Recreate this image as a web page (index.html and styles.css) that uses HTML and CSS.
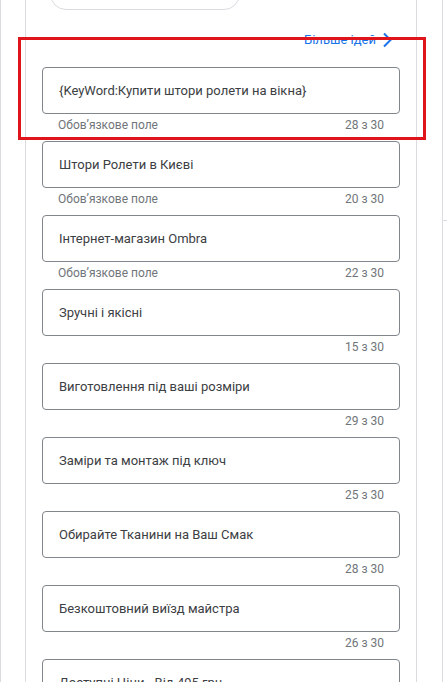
FILE: index.html
```html
<!DOCTYPE html>
<html lang="uk">

<head>
    <meta charset="UTF-8">
    <title>Заголовки</title>
    <link rel="stylesheet" href="styles.css">
</head>

<body>
    <div class="page">
        <div class="panel">
            <div class="chip"></div>

            <div class="more_row">
                <a class="more_link" href="#">Більше ідей</a>
                <svg class="chevron" width="11" height="16" viewBox="0 0 11 16">
                    <path d="M2 1.5l6.5 6.5-6.5 6.5" fill="none" stroke="#1a73e8" stroke-width="2" />
                </svg>
            </div>

            <div class="field">
                <div class="field_box">{KeyWord:Купити штори ролети на вікна}</div>
                <div class="field_help"><span>Обов’язкове поле</span><span>28 з 30</span></div>
            </div>
            <div class="field">
                <div class="field_box">Штори Ролети в Києві</div>
                <div class="field_help"><span>Обов’язкове поле</span><span>20 з 30</span></div>
            </div>
            <div class="field">
                <div class="field_box">Інтернет-магазин Ombra</div>
                <div class="field_help"><span>Обов’язкове поле</span><span>22 з 30</span></div>
            </div>
            <div class="field">
                <div class="field_box">Зручні і якісні</div>
                <div class="field_help"><span></span><span>15 з 30</span></div>
            </div>
            <div class="field">
                <div class="field_box">Виготовлення під ваші розміри</div>
                <div class="field_help"><span></span><span>29 з 30</span></div>
            </div>
            <div class="field">
                <div class="field_box">Заміри та монтаж під ключ</div>
                <div class="field_help"><span></span><span>25 з 30</span></div>
            </div>
            <div class="field">
                <div class="field_box">Обирайте Тканини на Ваш Смак</div>
                <div class="field_help"><span></span><span>28 з 30</span></div>
            </div>
            <div class="field">
                <div class="field_box">Безкоштовний виїзд майстра</div>
                <div class="field_help"><span></span><span>26 з 30</span></div>
            </div>
            <div class="field">
                <div class="field_box">Доступні Ціни - Від 495 грн</div>
                <div class="field_help"><span></span><span>27 з 30</span></div>
            </div>
        </div>

        <div class="side">
            <div class="side_top"></div>
        </div>
    </div>

    <!-- annotation frame drawn over the page -->
    <div class="highlight"></div>
</body>

</html>
```

FILE: styles.css
```css
* {
    box-sizing: border-box;
}

html,
body {
    height: 100%;
}

body {
    margin: 0;
    overflow: hidden;
    position: relative;
    background-color: #fff;
    font-family: Roboto, "Liberation Sans", Arial, sans-serif;
    border-left: 1px solid #dadce0;
}

.page {
    display: flex;
    align-items: flex-start;
    height: 100%;
}

.panel {
    margin-left: 24px;
    width: 392px;
    min-height: 100%;
    border-left: 1px solid #dadce0;
    border-right: 1px solid #dadce0;
    padding: 0 16px;
}

.chip {
    width: 190px;
    height: 40px;
    margin-top: -30px;
    margin-left: 8px;
    border: 1px solid #dadce0;
    border-radius: 16px;
}

.more_row {
    display: flex;
    justify-content: flex-end;
    align-items: center;
    gap: 6px;
    padding: 21px 7px 0 0;
    height: 39px;
    margin-bottom: 18px;
}

.more_link {
    color: #1a73e8;
    font-size: 13px;
    line-height: 18px;
    text-decoration: none;
}

.chevron {
    display: block;
    margin-top: -1px;
}

.field_box {
    height: 47px;
    border: 1px solid #80868b;
    border-radius: 4px;
    padding: 0 16px;
    display: flex;
    align-items: center;
    font-size: 13px;
    color: #3c4043;
    white-space: nowrap;
}

.field_help {
    height: 27px;
    padding: 3px 16px 0 16px;
    display: flex;
    justify-content: space-between;
    font-size: 12px;
    line-height: 16px;
    color: #70757a;
}

.side {
    margin-left: 25px;
    flex: 1;
    height: 100%;
    border-left: 1px solid #dadce0;
}

.side_top {
    height: 221px;
    border-bottom: 1px solid #dadce0;
}

.highlight {
    position: absolute;
    left: 17px;
    top: 37px;
    width: 408px;
    height: 103px;
    border: 3px solid #e0141b;
}
```
